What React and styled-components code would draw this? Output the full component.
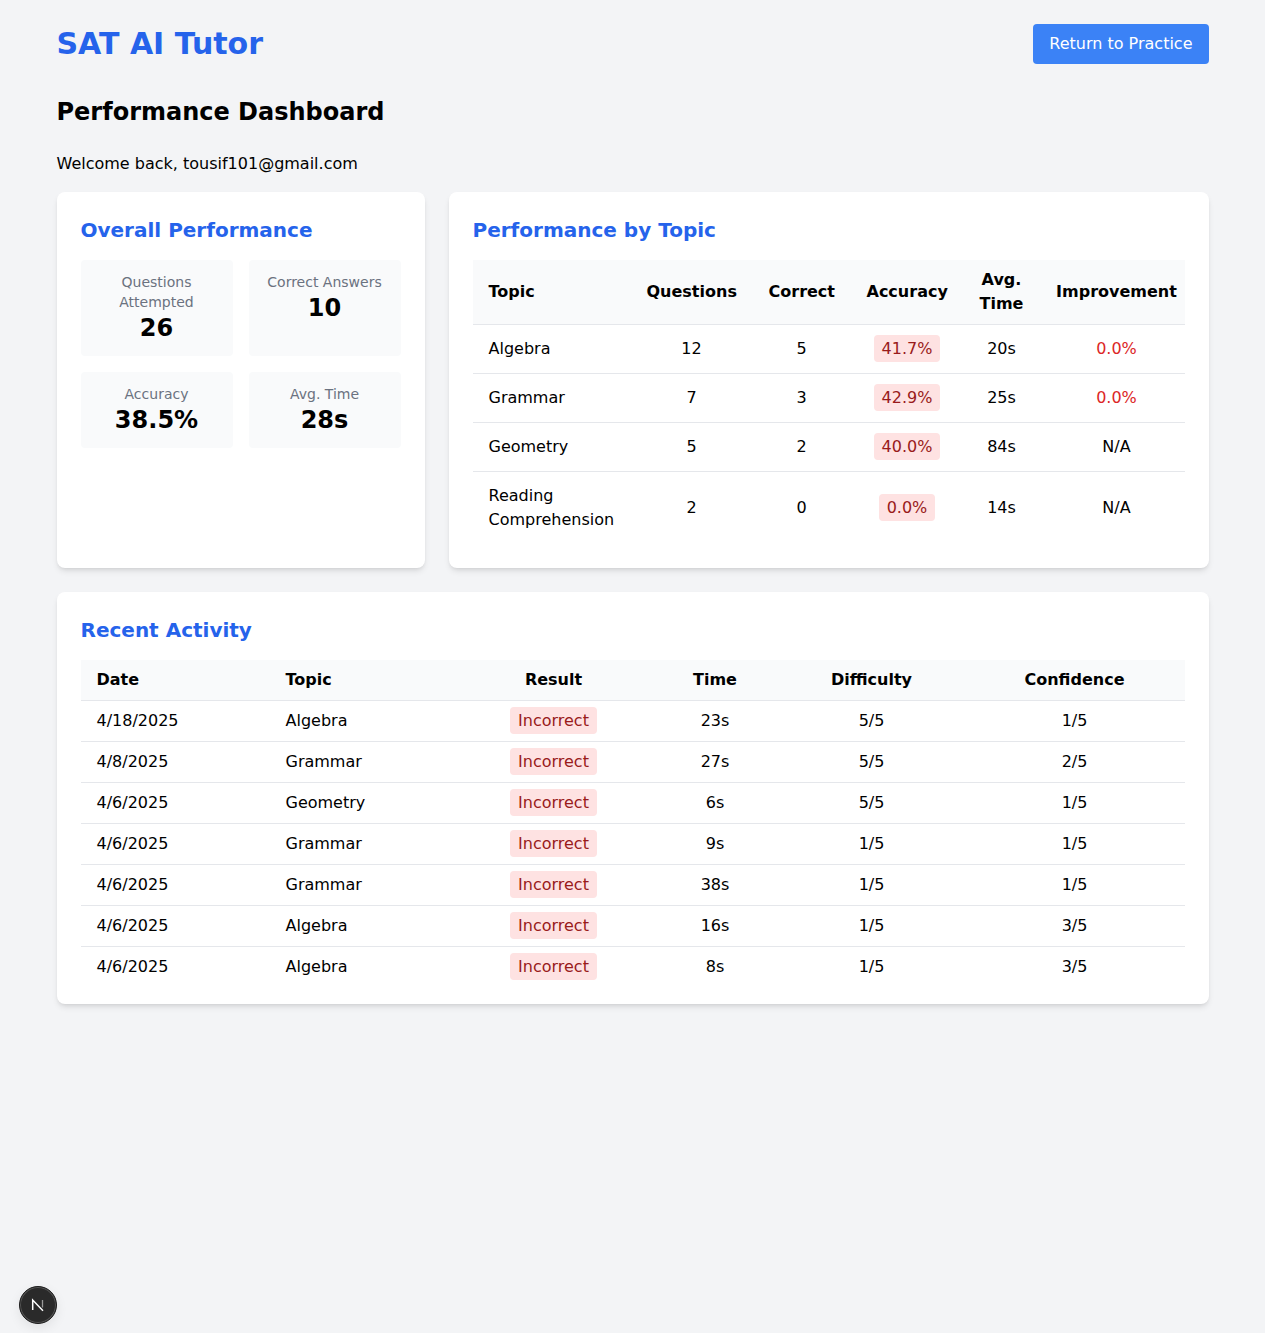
import React from 'react';
import styled, { createGlobalStyle } from 'styled-components';

const GlobalStyle = createGlobalStyle`
  * { box-sizing: border-box; }
  html, body { margin: 0; padding: 0; }
  body {
    background: #f3f4f6;
    color: #000;
    font-family: "DejaVu Sans", sans-serif;
    font-size: 16px;
    line-height: 24px;
  }
`;

const topics = [
  { name: 'Algebra', questions: 12, correct: 5, accuracy: '41.7%', time: '20s', improvement: '0.0%' },
  { name: 'Grammar', questions: 7, correct: 3, accuracy: '42.9%', time: '25s', improvement: '0.0%' },
  { name: 'Geometry', questions: 5, correct: 2, accuracy: '40.0%', time: '84s', improvement: 'N/A' },
  { name: 'Reading Comprehension', questions: 2, correct: 0, accuracy: '0.0%', time: '14s', improvement: 'N/A' },
];

const activity = [
  ['4/18/2025', 'Algebra', '23s', '5/5', '1/5'],
  ['4/8/2025', 'Grammar', '27s', '5/5', '2/5'],
  ['4/6/2025', 'Geometry', '6s', '5/5', '1/5'],
  ['4/6/2025', 'Grammar', '9s', '1/5', '1/5'],
  ['4/6/2025', 'Grammar', '38s', '1/5', '1/5'],
  ['4/6/2025', 'Algebra', '16s', '1/5', '3/5'],
  ['4/6/2025', 'Algebra', '8s', '1/5', '3/5'],
];

const App = () => (
  <>
    <GlobalStyle />
    <Page>
      <Header>
        <Brand>SAT AI Tutor</Brand>
        <ReturnButton>Return to Practice</ReturnButton>
      </Header>
      <PageTitle>Performance Dashboard</PageTitle>
      <Welcome>Welcome back, tousif101@gmail.com</Welcome>

      <TopGrid>
        <Card>
          <CardTitle>Overall Performance</CardTitle>
          <StatGrid>
            <Stat><StatLabel>Questions Attempted</StatLabel><StatValue>26</StatValue></Stat>
            <Stat><StatLabel>Correct Answers</StatLabel><StatValue>10</StatValue></Stat>
            <Stat><StatLabel>Accuracy</StatLabel><StatValue>38.5%</StatValue></Stat>
            <Stat><StatLabel>Avg. Time</StatLabel><StatValue>28s</StatValue></Stat>
          </StatGrid>
        </Card>
        <Card>
          <CardTitle>Performance by Topic</CardTitle>
          <TableScroll>
            <Table $width="721px">
              <colgroup>
                <col style={{ width: 158 }} />
                <col style={{ width: 122 }} />
                <col style={{ width: 98 }} />
                <col style={{ width: 113 }} />
                <col style={{ width: 76 }} />
                <col style={{ width: 154 }} />
              </colgroup>
              <thead>
                <tr>
                  <Th $left>Topic</Th>
                  <Th>Questions</Th>
                  <Th>Correct</Th>
                  <Th>Accuracy</Th>
                  <Th>Avg. Time</Th>
                  <Th>Improvement</Th>
                </tr>
              </thead>
              <tbody>
                {topics.map((t) => (
                  <tr key={t.name}>
                    <Td $left $pad="12px">{t.name}</Td>
                    <Td $pad="12px">{t.questions}</Td>
                    <Td $pad="12px">{t.correct}</Td>
                    <Td $pad="12px"><Badge>{t.accuracy}</Badge></Td>
                    <Td $pad="12px">{t.time}</Td>
                    <Td $pad="12px">
                      {t.improvement === 'N/A' ? t.improvement : <Negative>{t.improvement}</Negative>}
                    </Td>
                  </tr>
                ))}
              </tbody>
            </Table>
          </TableScroll>
        </Card>
      </TopGrid>

      <Card $paddingBottom="17px">
        <CardTitle>Recent Activity</CardTitle>
        <Table $width="100%">
          <colgroup>
            <col style={{ width: 189 }} />
            <col style={{ width: 186 }} />
            <col style={{ width: 196 }} />
            <col style={{ width: 127 }} />
            <col style={{ width: 186 }} />
            <col style={{ width: 220 }} />
          </colgroup>
          <thead>
            <tr>
              <Th $left>Date</Th>
              <Th $left>Topic</Th>
              <Th>Result</Th>
              <Th>Time</Th>
              <Th>Difficulty</Th>
              <Th>Confidence</Th>
            </tr>
          </thead>
          <tbody>
            {activity.map((row, i) => (
              <tr key={i}>
                <Td $left $pad="8px">{row[0]}</Td>
                <Td $left $pad="8px">{row[1]}</Td>
                <Td $pad="8px"><Badge>Incorrect</Badge></Td>
                <Td $pad="8px">{row[2]}</Td>
                <Td $pad="8px">{row[3]}</Td>
                <Td $pad="8px">{row[4]}</Td>
              </tr>
            ))}
          </tbody>
        </Table>
      </Card>
    </Page>
    <DevBadge aria-label="Next.js">
      <svg width="20" height="20" viewBox="0 0 20 20" fill="none">
        <path d="M4.7 15V5L15 15.8" stroke="#fff" strokeWidth="1.5" />
        <path d="M14.5 5V12.5" stroke="#999" strokeWidth="1.3" />
      </svg>
    </DevBadge>
  </>
);

const Page = styled.div`
  width: 1152px;
  min-height: 1333px;
  margin: 0 auto;
  padding: 24px 0 0;
`;

const Header = styled.header`
  display: flex;
  justify-content: space-between;
  align-items: center;
  height: 40px;
  margin-bottom: 32px;
`;

const Brand = styled.h1`
  margin: 0;
  font-size: 30px;
  line-height: 36px;
  font-weight: 700;
  color: #2563eb;
`;

const ReturnButton = styled.button`
  height: 40px;
  padding: 0 16px;
  border: 0;
  border-radius: 4px;
  background: #3b82f6;
  color: #fff;
  font-family: inherit;
  font-size: 16px;
  line-height: 24px;
`;

const PageTitle = styled.h2`
  margin: 0 0 24px;
  font-size: 24px;
  line-height: 32px;
  font-weight: 700;
`;

const Welcome = styled.p`
  margin: 0 0 16px;
`;

const TopGrid = styled.div`
  display: grid;
  grid-template-columns: 368px 760px;
  gap: 24px;
  margin-bottom: 24px;
`;

const Card = styled.section`
  padding: 24px 24px ${(p) => p.$paddingBottom || '24px'};
  background: #fff;
  border-radius: 8px;
  box-shadow: 0 4px 6px -1px rgba(0, 0, 0, 0.1), 0 2px 4px -2px rgba(0, 0, 0, 0.1);
`;

const CardTitle = styled.h3`
  margin: 0 0 16px;
  font-size: 20px;
  line-height: 28px;
  font-weight: 700;
  color: #2563eb;
`;

const StatGrid = styled.div`
  display: grid;
  grid-template-columns: 1fr 1fr;
  gap: 16px;
`;

const Stat = styled.div`
  padding: 12px;
  background: #f9fafb;
  border-radius: 4px;
  text-align: center;
`;

const StatLabel = styled.div`
  font-size: 14px;
  line-height: 20px;
  color: #6b7280;
`;

const StatValue = styled.div`
  font-size: 24px;
  line-height: 32px;
  font-weight: 700;
`;

const TableScroll = styled.div`
  overflow: hidden;
`;

const Table = styled.table`
  width: ${(p) => p.$width};
  border-collapse: collapse;
  table-layout: fixed;
`;

const Th = styled.th`
  padding: 8px 16px;
  background: #f9fafb;
  border-bottom: 1px solid #e5e7eb;
  font-weight: 700;
  text-align: ${(p) => (p.$left ? 'left' : 'center')};
`;

const Td = styled.td`
  padding: ${(p) => p.$pad} 16px;
  border-bottom: 1px solid #e5e7eb;
  text-align: ${(p) => (p.$left ? 'left' : 'center')};
  tr:last-child & { border-bottom: 0; }
`;

const Badge = styled.span`
  padding: 4px 8px;
  background: #fee2e2;
  border-radius: 4px;
  color: #991b1b;
`;

const Negative = styled.span`
  color: #dc2626;
`;

const DevBadge = styled.div`
  position: fixed;
  left: 19px;
  top: 1286px;
  width: 38px;
  height: 38px;
  display: flex;
  align-items: center;
  justify-content: center;
  border-radius: 50%;
  background: #2a2a2a;
  border: 1px solid #1c1c1c;
  box-shadow: inset 0 0 0 1px #555, 0 4px 12px rgba(0, 0, 0, 0.08);
`;

export default App;
